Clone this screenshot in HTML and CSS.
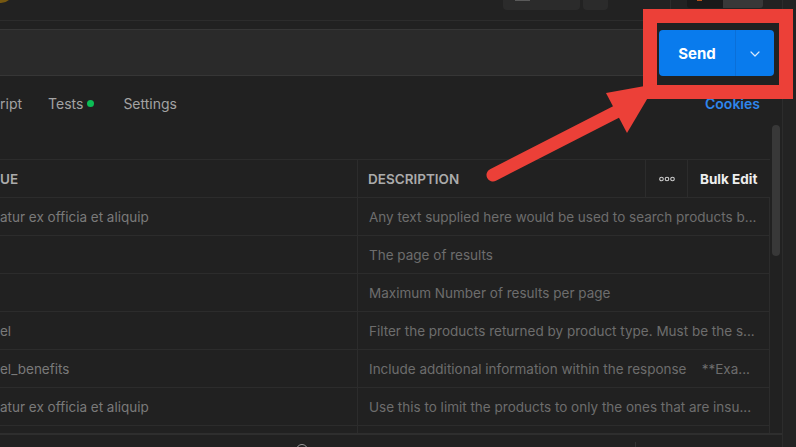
FILE: index.html
```html
<!DOCTYPE html>
<html lang="en">
<head>
<meta charset="utf-8">
<title>Request – Params</title>
<link rel="stylesheet" href="styles.css">
</head>
<body>
<div class="app">
  <div class="main">
    <header class="topbar">
      <div class="avatar"></div>
      <div class="tb-right">
        <div class="tb-btn tb-wide"><span class="tb-icon"></span></div>
        <div class="tb-btn tb-narrow"></div>
        <div class="tb-sep"></div>
        <div class="tb-dark"><span class="tb-dot"></span></div>
        <div class="tb-light"></div>
      </div>
    </header>
    <div class="subbar"></div>
    <div class="urlrow">
      <div class="url"></div>
      <div class="send">
        <div class="send-main">Send</div>
        <div class="send-drop">
          <svg width="10" height="6" viewBox="0 0 10 6"><path d="M1 1l4 4 4-4" fill="none" stroke="#d6e8fc" stroke-width="1.2" stroke-linecap="round" stroke-linejoin="round"/></svg>
        </div>
      </div>
    </div>
    <nav class="tabs">
      <span class="tab tab-first">ript</span>
      <span class="tab">Tests<span class="dot"></span></span>
      <span class="tab">Settings</span>
      <span class="cookies">Cookies</span>
    </nav>
    <section class="params">
      <div class="table">
        <div class="row head">
          <div class="c-val"><span>UE</span></div>
          <div class="h-desc">DESCRIPTION</div>
          <div class="h-more">
            <svg width="16" height="6" viewBox="0 0 16 6"><circle cx="2.5" cy="3" r="1.8" fill="none" stroke="#cfcfcf" stroke-width="1.1"/><circle cx="8" cy="3" r="1.8" fill="none" stroke="#cfcfcf" stroke-width="1.1"/><circle cx="13.5" cy="3" r="1.8" fill="none" stroke="#cfcfcf" stroke-width="1.1"/></svg>
          </div>
          <div class="h-bulk">Bulk Edit</div>
        </div>
        <div class="row body">
          <div class="c-val"><span>atur ex officia et aliquip</span></div>
          <div class="c-desc">Any text supplied here would be used to search products b...</div>
        </div>
        <div class="row body">
          <div class="c-val"></div>
          <div class="c-desc">The page of results</div>
        </div>
        <div class="row body">
          <div class="c-val"></div>
          <div class="c-desc">Maximum Number of results per page</div>
        </div>
        <div class="row body">
          <div class="c-val"><span>el</span></div>
          <div class="c-desc">Filter the products returned by product type. Must be the s...</div>
        </div>
        <div class="row body">
          <div class="c-val"><span>el_benefits</span></div>
          <div class="c-desc">Include additional information within the response    **Exa...</div>
        </div>
        <div class="row body">
          <div class="c-val"><span>atur ex officia et aliquip</span></div>
          <div class="c-desc">Use this to limit the products to only the ones that are insu...</div>
        </div>
        <div class="row body">
          <div class="c-val"></div>
          <div class="c-desc"></div>
        </div>
      </div>
    </section>
    <footer class="bottom">
      <span class="b-icon"></span>
      <span class="b-sep"></span>
    </footer>
  </div>
  <aside class="side"></aside>
</div>
<div class="thumb"></div>
<svg class="annot" width="796" height="447" viewBox="0 0 796 447">
  <rect x="650" y="16" width="136" height="76" fill="none" stroke="#ec4038" stroke-width="14"/>
  <line x1="493" y1="175" x2="616" y2="112" stroke="#ec4038" stroke-width="13" stroke-linecap="round"/>
  <polygon points="606,93 627,133 656,84" fill="#ec4038"/>
</svg>
</body>
</html>
```

FILE: styles.css
```css
* {
  box-sizing: border-box;
  margin: 0;
  padding: 0;
}

html,
body {
  width: 796px;
  height: 447px;
  overflow: hidden;
}

body {
  position: relative;
  background: #212121;
  font-family: Inter, "Noto Sans", sans-serif;
  color: #a6a6a6;
}

.app {
  display: flex;
  height: 447px;
}

.main {
  width: 783px;
  border-right: 1px solid #2c2c2c;
  display: flex;
  flex-direction: column;
}

.side {
  flex: 1;
  background: #232323;
}

/* top bar */
.topbar {
  height: 21px;
  flex: none;
  background: #222222;
  border-bottom: 1px solid #2c2c2c;
  display: flex;
  align-items: flex-start;
  overflow: hidden;
}

.avatar {
  width: 24px;
  height: 24px;
  border-radius: 50%;
  background: #765811;
  margin: -21px 0 0 -11px;
  flex: none;
}

.tb-right {
  margin-left: auto;
  margin-right: 19px;
  display: flex;
  align-items: flex-start;
}

.tb-btn {
  height: 10px;
  background: #2b2b2b;
  border-radius: 0 0 4px 4px;
}

.tb-wide {
  width: 77px;
  padding-left: 12px;
}

.tb-icon {
  display: block;
  width: 15px;
  height: 1px;
  background: #5a5a5a;
}

.tb-narrow {
  width: 25px;
  margin-left: 3px;
}

.tb-sep {
  width: 1px;
  height: 20px;
  background: #2c2c2c;
  margin-left: 62px;
}

.tb-dark {
  width: 36px;
  height: 8px;
  margin-left: 16px;
  background: #191919;
  border-radius: 0 0 0 3px;
  padding-left: 10px;
}

.tb-dot {
  display: block;
  width: 5px;
  height: 1px;
  background: #b4541c;
}

.tb-light {
  width: 40px;
  height: 8px;
  background: #383838;
  border-radius: 0 0 3px 0;
}

.subbar {
  height: 8px;
  flex: none;
}

/* url row */
.urlrow {
  height: 47px;
  flex: none;
  display: flex;
  align-items: flex-start;
}

.url {
  flex: 1;
  height: 47px;
  background: #2a2a2a;
  border-top: 1px solid #363636;
  border-bottom: 1px solid #363636;
}

.send {
  width: 115px;
  height: 46px;
  margin: 1px 8px 0 8px;
  background: #097bed;
  border-radius: 4px;
  display: flex;
}

.send-main {
  width: 77px;
  border-right: 1px solid #0a6fd8;
  color: #ffffff;
  font-weight: 700;
  font-size: 15px;
  display: flex;
  align-items: center;
  justify-content: center;
}

.send-drop {
  flex: 1;
  display: flex;
  align-items: center;
  justify-content: center;
  padding-top: 1px;
}

/* tabs */
.tabs {
  height: 54px;
  flex: none;
  display: flex;
  align-items: center;
  font-size: 14px;
  color: #a3a3a3;
}

.tab {
  display: flex;
  align-items: center;
  margin-right: 29px;
}

.tab-first {
  margin-right: 26px;
}

.dot {
  width: 7px;
  height: 7px;
  border-radius: 50%;
  background: #0cbd55;
  margin-left: 4px;
}

.cookies {
  margin-left: auto;
  margin-right: 22px;
  color: #2f86ec;
  font-weight: 600;
}

/* params table */
.params {
  flex: 1;
  overflow: hidden;
  padding-top: 29px;
}

.table {
  width: 770px;
  font-size: 13.5px;
}

.row {
  display: flex;
  border-bottom: 1px solid #2c2c2c;
  white-space: pre;
  overflow: hidden;
}

.head {
  height: 39px;
  border-top: 1px solid #2c2c2c;
  font-weight: 600;
  color: #ababab;
}

.body {
  height: 38px;
  border-right: 1px solid #2c2c2c;
}

.c-val {
  width: 358px;
  flex: none;
  border-right: 1px solid #2c2c2c;
  display: flex;
  align-items: center;
  overflow: hidden;
  color: #7a7a7a;
}

.head .c-val {
  color: #ababab;
}

.c-desc {
  flex: 1;
  padding-left: 11px;
  display: flex;
  align-items: center;
  overflow: hidden;
  color: #6d6d6d;
}

.h-desc {
  width: 288px;
  flex: none;
  padding-left: 10px;
  border-right: 1px solid #2c2c2c;
  display: flex;
  align-items: center;
}

.h-more {
  width: 42px;
  flex: none;
  border-right: 1px solid #2c2c2c;
  display: flex;
  align-items: center;
  justify-content: center;
}

.h-bulk {
  flex: 1;
  padding-left: 12px;
  display: flex;
  align-items: center;
  color: #eeeeee;
  font-weight: 700;
}

/* bottom */
.bottom {
  height: 14px;
  flex: none;
  border-top: 2px solid #2e2e2e;
  display: flex;
  align-items: flex-start;
}

.b-icon {
  width: 12px;
  height: 12px;
  border-radius: 50%;
  border: 1.5px solid #9a9a9a;
  margin: 9px 0 0 296px;
}

.b-sep {
  width: 1px;
  height: 10px;
  background: #333333;
  margin: 7px 0 0 327px;
}

/* overlays */
.thumb {
  position: absolute;
  left: 772px;
  top: 125px;
  width: 8px;
  height: 131px;
  border-radius: 4px;
  background: #383838;
}

.annot {
  position: absolute;
  left: 0;
  top: 0;
  pointer-events: none;
}
```
